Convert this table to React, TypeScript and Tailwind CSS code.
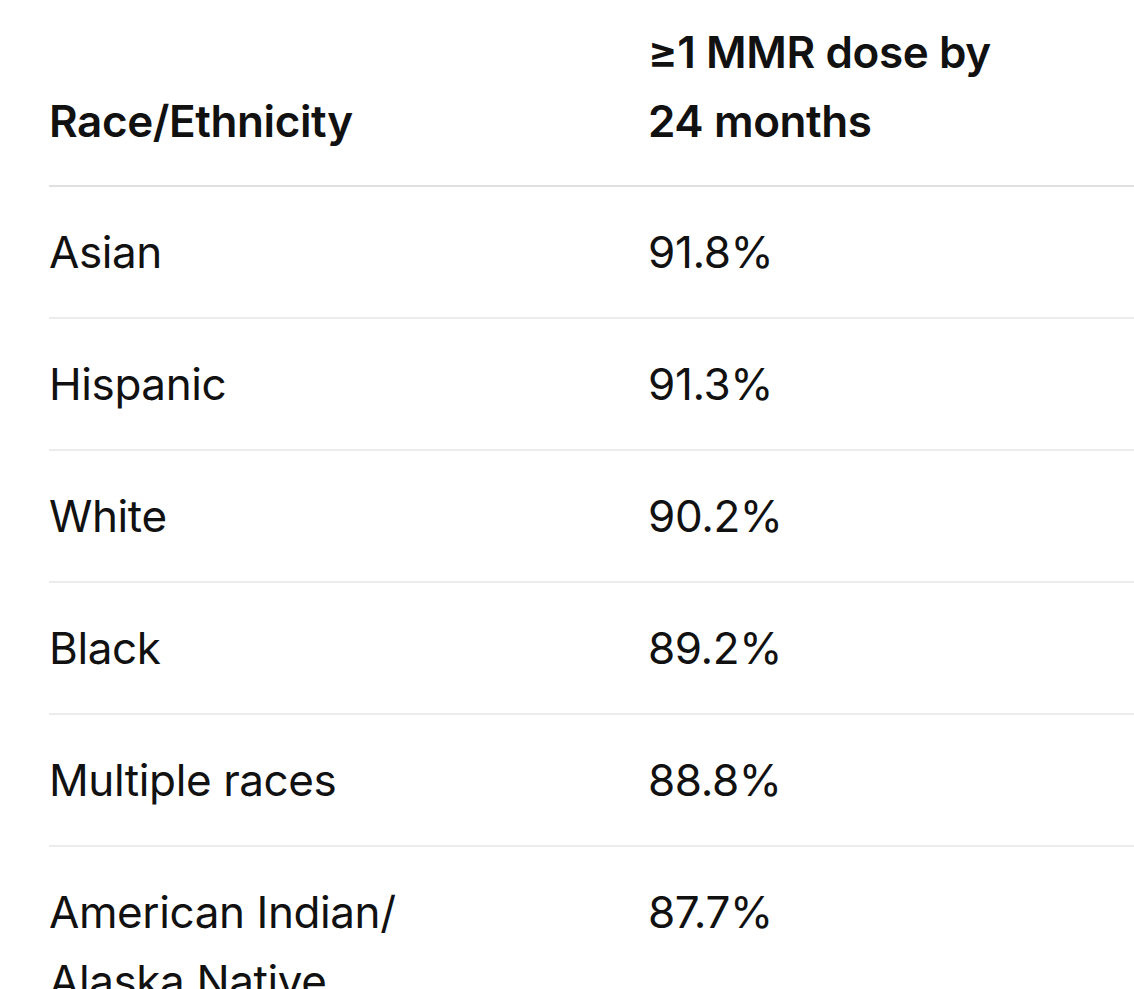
const ROWS: { group: string; rate: string }[] = [
  { group: 'Asian', rate: '91.8%' },
  { group: 'Hispanic', rate: '91.3%' },
  { group: 'White', rate: '90.2%' },
  { group: 'Black', rate: '89.2%' },
  { group: 'Multiple races', rate: '88.8%' },
  { group: 'American Indian/ Alaska Native', rate: '87.7%' },
];

export default function App() {
  return (
    <div className="h-[989px] overflow-hidden bg-white pl-[49px] font-['Inter','Noto_Sans',sans-serif] text-[44px] leading-[69px] tracking-[-0.4px] text-[#111111]">
      <div className="grid grid-cols-[599px_1fr] items-end border-b-2 border-[#e0e0e0] pt-[18px] pb-[29px] font-semibold">
        <div>Race/Ethnicity</div>
        <div className="w-[360px]">≥1 MMR dose by 24 months</div>
      </div>
      {ROWS.map((row) => (
        <div
          key={row.group}
          className="grid grid-cols-[599px_1fr] items-start border-b-2 border-[#ececec] pt-[31px] pb-[30px]"
        >
          <div className="w-[400px]">{row.group}</div>
          <div>{row.rate}</div>
        </div>
      ))}
    </div>
  );
}
